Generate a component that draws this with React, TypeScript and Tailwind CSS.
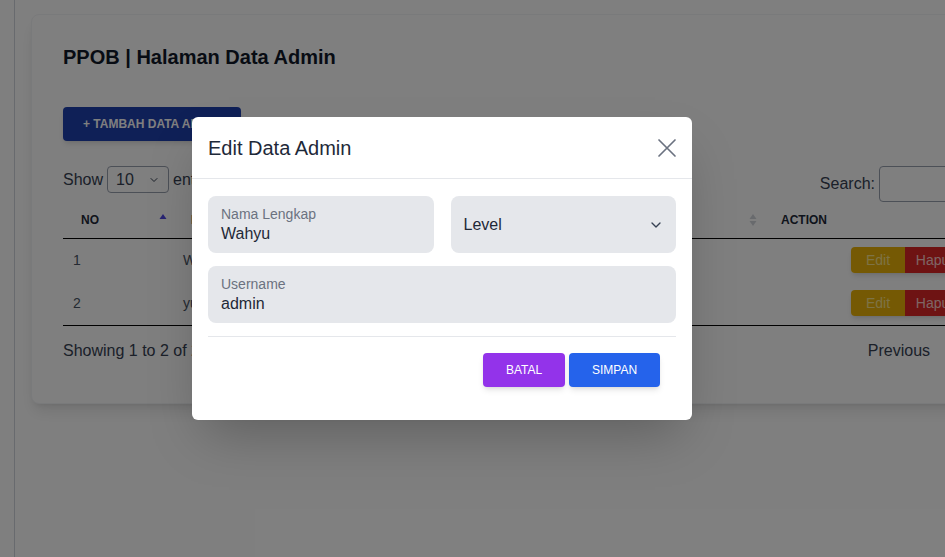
import { ChevronDown } from "lucide-react";

const rows = [
  { no: 1, nama: "Wahyu", username: "admin", level: "Admin" },
  { no: 2, nama: "yusuf", username: "yusuf", level: "Petugas" },
];

function SortIcon({ active }: { active?: boolean }) {
  return (
    <svg width="8" height="14" viewBox="0 0 8 14" className="shrink-0">
      <path d="M4 1 L7.5 6 L0.5 6 Z" fill={active ? "#4f46e5" : "#d1d5db"} />
      {!active && <path d="M4 13 L7.5 8 L0.5 8 Z" fill="#d1d5db" />}
    </svg>
  );
}

function Field({ label, value }: { label: string; value: string }) {
  return (
    <div className="h-[57px] rounded-lg bg-[#e5e7eb] px-[13px] pt-[10px]">
      <div className="text-sm leading-4 text-[#6b7280]">{label}</div>
      <div className="mt-[2px] text-base leading-5 text-[#1f2937]">{value}</div>
    </div>
  );
}

export default function App() {
  return (
    <div className="relative h-[557px] w-[945px] overflow-hidden bg-white font-['Liberation_Sans',Arial,sans-serif]">
      <div className="flex h-full">
        <div className="w-[15px] shrink-0 border-r border-gray-300"></div>

        <div className="pl-4 pt-[14px]">
          <div className="w-[981px] rounded-lg border border-gray-100 bg-white px-[31px] pb-[40px] pt-[30px] shadow-lg">
            <h1 className="text-xl font-bold leading-6 text-gray-900">
              PPOB | Halaman Data Admin
            </h1>

            <button className="mt-[38px] h-[34px] w-[178px] rounded bg-[#1e40af] text-xs font-bold uppercase text-white shadow-md">
              + Tambah Data Admin
            </button>

            <div className="mt-[25px] flex items-end justify-between">
              <div className="mb-[9px] flex items-center gap-1 text-base text-gray-700">
                <span>Show</span>
                <div className="flex h-[27px] w-[62px] items-center justify-between rounded border border-gray-400 px-2">
                  <span>10</span>
                  <ChevronDown size={12} strokeWidth={2} />
                </div>
                <span>entries</span>
              </div>
              <div className="flex items-center gap-1 text-base text-gray-700">
                <span>Search:</span>
                <div className="h-9 w-[101px] rounded border border-gray-400 bg-white"></div>
              </div>
            </div>

            <table className="w-full text-left">
              <thead>
                <tr className="h-[36px] border-b border-black text-xs font-bold text-gray-800">
                  <th className="w-[110px] pl-[18px] pr-[6px]">
                    <div className="flex items-center justify-between">
                      <span>NO</span>
                      <SortIcon active />
                    </div>
                  </th>
                  <th className="w-[200px] pl-[18px] pr-[6px]">
                    <div className="flex items-center justify-between">
                      <span>NAMA LENGKAP</span>
                      <SortIcon />
                    </div>
                  </th>
                  <th className="w-[200px] pl-[18px] pr-[6px]">
                    <div className="flex items-center justify-between">
                      <span>USERNAME</span>
                      <SortIcon />
                    </div>
                  </th>
                  <th className="w-[190px] pl-[18px] pr-[6px]">
                    <div className="flex items-center justify-between">
                      <span>LEVEL</span>
                      <SortIcon />
                    </div>
                  </th>
                  <th className="pl-[18px]">ACTION</th>
                </tr>
              </thead>
              <tbody className="text-sm text-gray-600">
                {rows.map((r, i) => (
                  <tr
                    key={r.no}
                    className={`h-[43.5px] ${i === rows.length - 1 ? "border-b border-black" : ""}`}
                  >
                    <td className="px-[10px]">{r.no}</td>
                    <td className="px-[10px]">{r.nama}</td>
                    <td className="px-[10px]">{r.username}</td>
                    <td className="px-[10px]">{r.level}</td>
                    <td className="pl-[88px]">
                      <div className="flex h-[26px] w-fit overflow-hidden rounded shadow-md">
                        <span className="flex w-[54px] items-center justify-center bg-[#eab308] text-sm text-[#fde68a]">
                          Edit
                        </span>
                        <span className="flex w-[62px] items-center justify-center bg-[#dc2626] text-sm text-[#fecaca]">
                          Hapus
                        </span>
                      </div>
                    </td>
                  </tr>
                ))}
              </tbody>
            </table>

            <div className="mt-[13px] flex items-center justify-between text-base text-gray-700">
              <span>Showing 1 to 2 of 2 entries</span>
              <div className="flex gap-[17px]">
                <span>Previous</span>
                <span>Next</span>
              </div>
            </div>
          </div>
        </div>
      </div>

      {/* modal */}
      <div className="absolute inset-0 bg-black/50">
        <div className="absolute left-[192px] top-[117px] w-[500px] rounded-md bg-white shadow-2xl">
          <div className="flex h-[62px] items-center justify-between border-b border-gray-200 px-4">
            <h2 className="text-xl text-gray-800">Edit Data Admin</h2>
            <svg width="20" height="20" viewBox="0 0 20 20" className="mr-[-1px]">
              <path
                d="M2 2 L18 18 M18 2 L2 18"
                stroke="#6b7280"
                strokeWidth="1.7"
                strokeLinecap="round"
              />
            </svg>
          </div>

          <div className="px-4 pt-[17px]">
            <div className="grid grid-cols-2 gap-[17px]">
              <Field label="Nama Lengkap" value="Wahyu" />
              <div className="flex h-[57px] items-center justify-between rounded-lg bg-[#e5e7eb] pl-[13px] pr-3 text-base text-[#1f2937]">
                <span>Level</span>
                <ChevronDown size={16} strokeWidth={2} className="text-gray-700" />
              </div>
            </div>
            <div className="mt-[13px]">
              <Field label="Username" value="admin" />
            </div>

            <div className="mt-[13px] border-t border-gray-200"></div>

            <div className="flex justify-end gap-1 pb-[33px] pr-4 pt-[16px]">
              <button className="h-[34px] w-[82px] rounded bg-[#9333ea] text-xs text-white shadow-md">
                BATAL
              </button>
              <button className="h-[34px] w-[91px] rounded bg-[#2563eb] text-xs text-white shadow-md">
                SIMPAN
              </button>
            </div>
          </div>
        </div>
      </div>
    </div>
  );
}
